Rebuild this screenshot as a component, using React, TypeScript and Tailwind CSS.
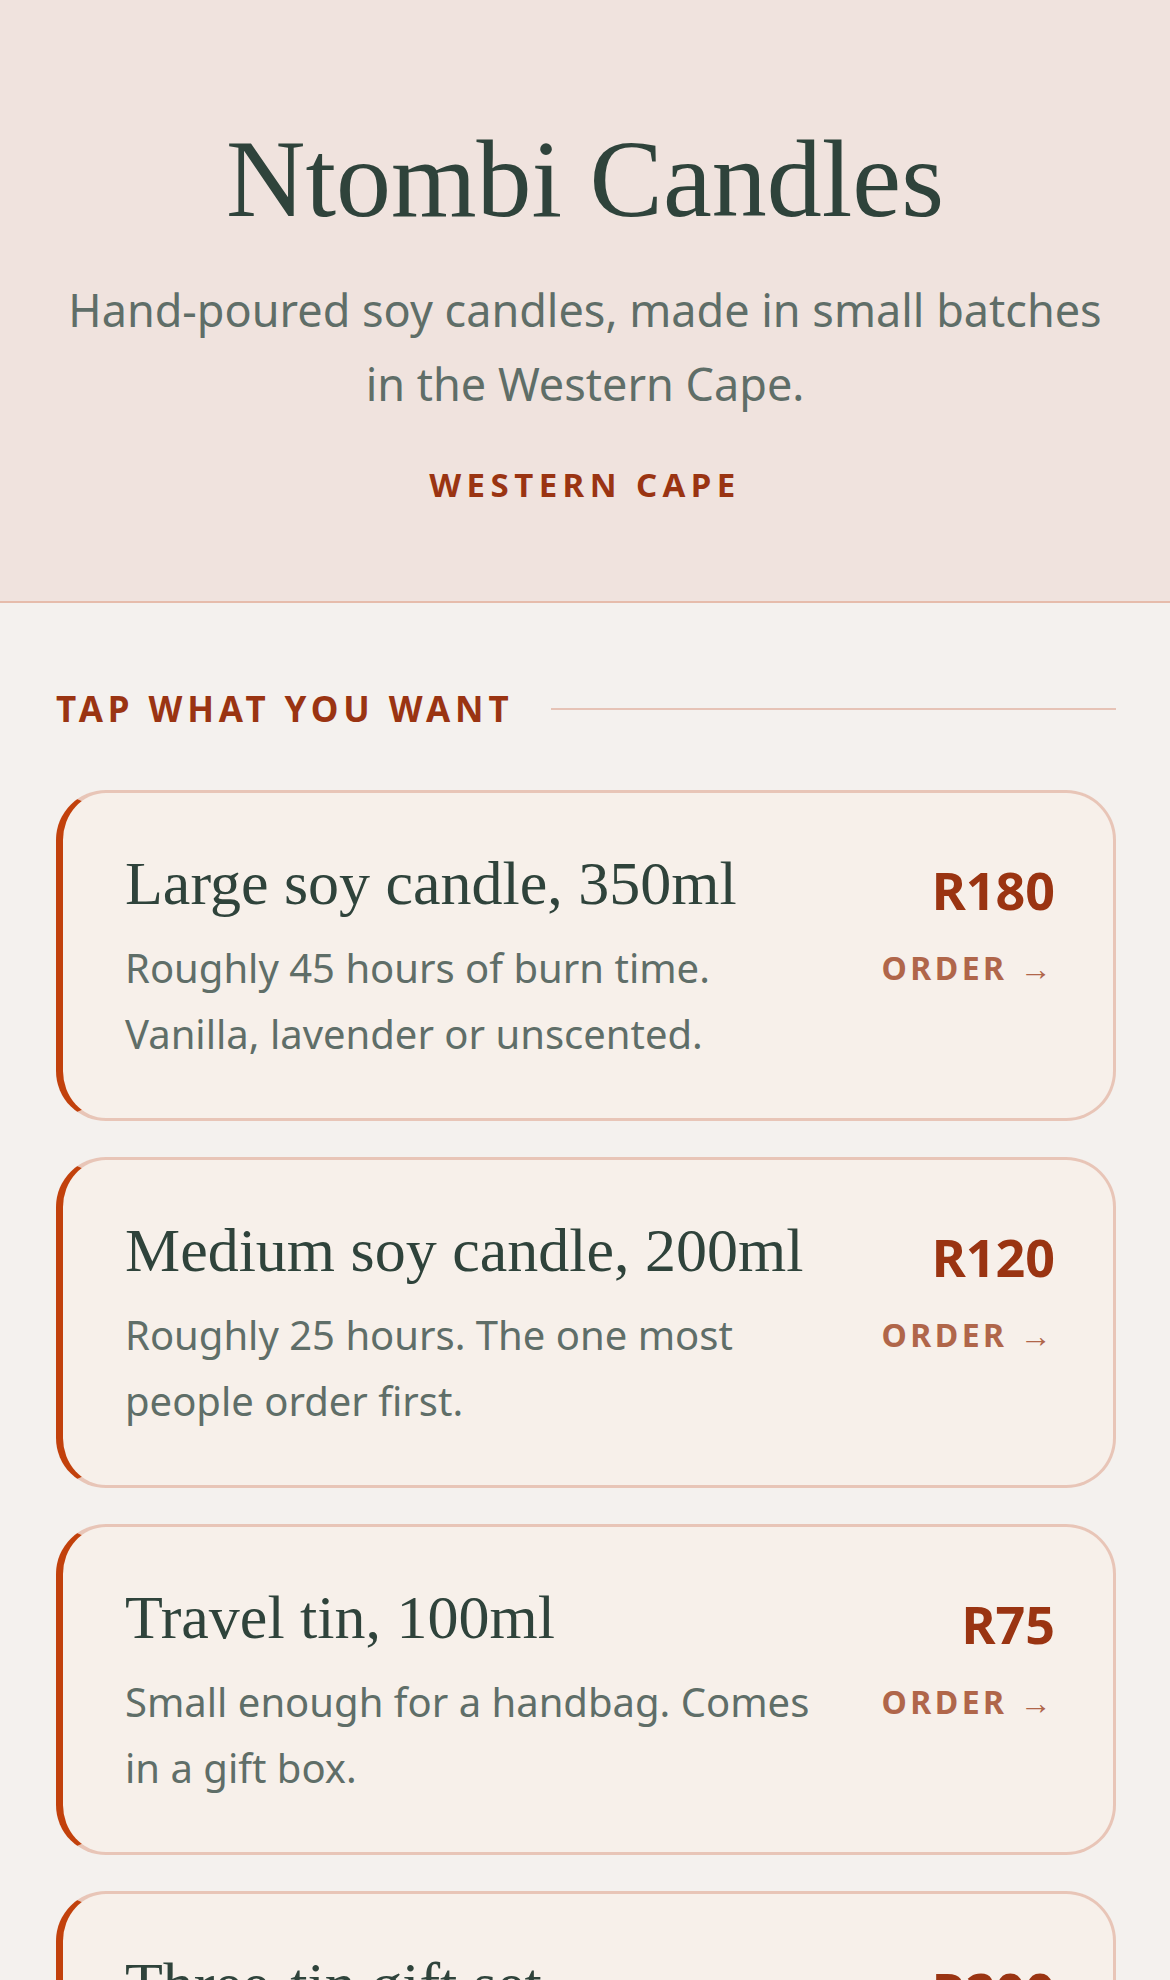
import React from "react";

const items = [
  { name: "Large soy candle, 350ml", desc: "Roughly 45 hours of burn time. Vanilla, lavender or unscented.", price: "R180" },
  { name: "Medium soy candle, 200ml", desc: "Roughly 25 hours. The one most people order first.", price: "R120" },
  { name: "Travel tin, 100ml", desc: "Small enough for a handbag. Comes in a gift box.", price: "R75" },
  { name: "Three-tin gift set", desc: "One of each scent in a kraft box, ready to give.", price: "R200" },
];

export default function App() {
  return (
    <div className="min-h-screen bg-[#f4f1ee] font-['Noto_Sans',sans-serif]">
      <header className="bg-[#f0e3de] border-b-2 border-[#e6bcab] pt-[119px] pb-[92px] px-[56px] text-center">
        <h1 className="font-['Georgia','Liberation_Serif',serif] text-[110px] leading-[121px] text-[#2f433b]">
          Ntombi Candles
        </h1>
        <p className="mt-[33px] text-[45px] leading-[74px] text-[#5f6e68]">
          Hand-poured soy candles, made in small batches in the Western Cape.
        </p>
        <p className="mt-[40px] text-[33px] leading-[48px] font-bold tracking-[0.165em] text-[#9a3412]">WESTERN CAPE</p>
      </header>

      <main className="pl-[56px] pr-[54px] pt-[80px]">
        <div className="flex items-center gap-[37px]">
          <span className="text-[35px] leading-[52px] font-bold tracking-[0.14em] text-[#9a3412] whitespace-nowrap">
            TAP WHAT YOU WANT
          </span>
          <div className="h-[2px] flex-1 bg-[#e6c3b6]" />
        </div>

        <div className="mt-[55px] flex flex-col gap-[36px]">
          {items.map((it) => (
            <div
              key={it.name}
              className="flex gap-[40px] rounded-[50px] border-[3px] border-l-[7px] border-[#e8c5b7] border-l-[#c2410c] bg-[#f7f0ea] pl-[62px] pr-[58px] pt-[53px] pb-[51px]"
            >
              <div className="flex-1 min-w-0">
                <h2 className="font-['Georgia','Liberation_Serif',serif] text-[62px] leading-[74px] text-[#2f433b]">
                  {it.name}
                </h2>
                <p className="mt-[15px] text-[40px] leading-[66px] text-[#5f6e68]">{it.desc}</p>
              </div>
              <div className="shrink-0 flex flex-col items-end">
                <div className="mt-[13px] text-[52px] font-bold leading-[62px] text-[#9a3412]">{it.price}</div>
                <div className="mt-[27px] text-[32px] leading-[40px] font-bold tracking-[0.11em] text-[#b0664a] whitespace-nowrap">
                  ORDER →
                </div>
              </div>
            </div>
          ))}
        </div>
      </main>
    </div>
  );
}
